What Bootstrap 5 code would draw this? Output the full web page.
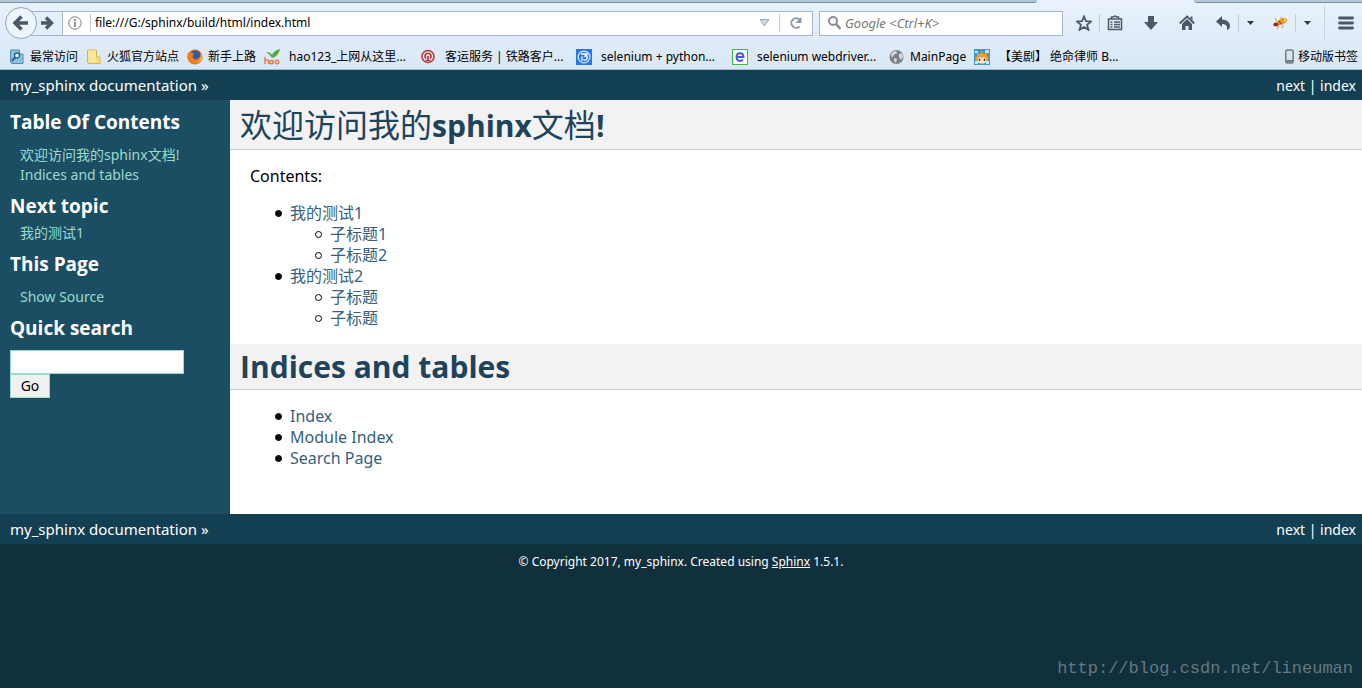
<!DOCTYPE html>
<html lang="zh-CN">
<head>
<meta charset="utf-8">
<meta name="viewport" content="width=device-width, initial-scale=1">
<title>欢迎访问我的sphinx文档!</title>
<link href="https://cdn.jsdelivr.net/npm/bootstrap@5.3.0/dist/css/bootstrap.min.css" rel="stylesheet">
<style>
body { font-family: "Noto Sans", "Noto Sans CJK SC", sans-serif; font-size: 16px; line-height: 21px; color: #000; background: #11303d; }
a { text-decoration: none; }
svg { display: block; flex: none; }
/* browser chrome */
.chrome { background: linear-gradient(#e9f2fc, #d8e7f6); border-bottom: 1px solid #a3b9ce; height: 70px; font-size: 12px; line-height: 16px; }
.tabline { height: 3px; }
.tabline span { background: #b4c8dc; border-bottom: 1px solid #7590ad; }
.tab-left { width: 1037px; border-bottom-right-radius: 4px; }
.tab-right { width: 168px; border-bottom-left-radius: 4px; }
.toolbar { height: 40px; padding-left: 5px; }
.chrome button { background: none; border: 0; padding: 0; color: #4b5966; }
.chrome .back { width: 32px; height: 32px; border: 1px solid #8ea5bc; border-radius: 50%; background: #eff5fc; z-index: 1; }
.chrome .forward { width: 31px; height: 25px; margin-left: -6px; border: 1px solid #9db3c9; border-width: 1px 0; background: #e4eef9; }
.chrome .field { height: 25px; border: 1px solid #a3b7cb; background: #fff; }
.chrome .address { padding: 0 8px 0 5px; }
.chrome .field input { border: 0; outline: 0; background: none; padding: 0; min-width: 0; color: #000; font-size: 12px; }
.chrome .search { width: 244px; margin-left: 6px; }
.chrome .search input { font-size: 13px; }
.chrome .search input::placeholder { color: #777; font-style: italic; }
.rule { width: 1px; height: 18px; background: #c0ccd8; }
.rule-tall { width: 1px; height: 36px; background: #c8d4e1; }
.tools { width: 299px; padding-left: 13px; }
.tools button { width: 16px; margin-right: 20px; }
.tools .tight { margin-right: 7px; }
.tools .gap-after { margin-right: 7px; }
.tools .caret { width: 9px; margin-right: 17px; }
.tools .menu { width: 16px; margin: 0; }
.bookmarks { display: grid; grid-template-columns: 77px 101px 77px 156px 156px 156px 157px 85px 1fr auto; padding: 0 4px 0 9px; height: 26px; }
.bookmarks a { color: #000; display: flex; align-items: center; gap: 5px; white-space: nowrap; padding-top: 1px; }
.bookmarks .wide { gap: 9px; }
/* documentation */
.related { background: #133f52; height: 30px; padding: 0 6px 0 10px; font-size: 14px; color: #fff; }
.related .crumb { font-size: 15px; }
.related a, .foot a { color: #fff; }
.sidebar { width: 230px; background: #1c4e63; padding: 10px; font-size: 14px; line-height: 20px; }
.sidebar h3 { font: bold 19px/24px "Open Sans", "Noto Sans", sans-serif; color: #fff; margin: 0; }
.sidebar ul { list-style: none; margin: 0; padding: 11px 10px 9px; }
.sidebar .next { padding: 5px 10px 9px; }
.sidebar form { padding-top: 10px; }
.sidebar a { color: #98dbcc; }
.sidebar .query { width: 174px; height: 24px; border: 1px solid #98dbcc; display: block; padding: 2px; }
.sidebar .go { width: 40px; height: 24px; border: 1px solid #98dbcc; background: #f0f0f0; display: block; padding: 0; color: #000; }
.doc { background: #fff; min-height: 414px; padding-bottom: 45px; }
.doc h1 { font: bold 30px/40px "Open Sans", "Noto Sans", "Noto Sans CJK SC", sans-serif; color: #20435c; background: #f2f2f2; border-bottom: 1px solid #ccc; margin: 0 0 16px; padding: 3px 10px 2px; }
.doc h1.lead-title { padding: 6px 10px 3px; }
.doc h1 span { font-size: 32px; line-height: 32px; font-weight: 400; }
.doc a { color: #355f7c; }
.doc p { margin: 0 20px 16px; }
.doc ul { margin: 0 20px 15px; padding-left: 40px; list-style: none; }
.doc ul ul { margin: 0; }
.doc li::before { content: ""; display: inline-block; width: 7px; height: 7px; margin: 0 8px 0 -15px; vertical-align: 2px; border: 1px solid #000; border-radius: 50%; background: #000; }
.doc ul ul li::before { background: none; }
.foot { font-size: 12px; line-height: 16px; color: #fff; }
.copyright { padding-top: 10px; }
.stamp { font: 17px/20px "Liberation Mono", monospace; color: #66777f; padding: 0 9px 9px; }
</style>
</head>
<body class="d-flex flex-column min-vh-100">
<header class="chrome">
  <div class="tabline d-flex justify-content-between"><span class="tab-left"></span><span class="tab-right"></span></div>
  <div class="toolbar d-flex align-items-center">
    <button class="back d-flex align-items-center justify-content-center position-relative" aria-label="Back"><svg width="16" height="16"><path d="M8.500 1.500 2 8l6.500 6.500M3 8h12" fill="none" stroke="currentColor" stroke-width="3.500"/></svg></button>
    <button class="forward d-flex align-items-center justify-content-end pe-2" aria-label="Forward"><svg width="14" height="14"><path d="M6 1.500 11.500 7 6 12.500M1 7h10" fill="none" stroke="currentColor" stroke-width="3.400"/></svg></button>
    <div class="field address d-flex align-items-center flex-grow-1">
      <svg class="me-2" width="14" height="14"><circle cx="7" cy="7" r="6.200" fill="none" stroke="#7b7b7b"/><path d="M7 3v2M7 6v5" stroke="#7b7b7b" stroke-width="1.600"/></svg>
      <span class="rule me-1"></span>
      <input class="flex-grow-1" type="text" aria-label="Address" value="file:///G:/sphinx/build/html/index.html">
      <button class="me-2" aria-label="History"><svg width="12" height="10"><path d="M1 1.500h9L5.500 8z" fill="#d3dae0" stroke="#9ba6b1"/></svg></button>
      <span class="rule me-2"></span>
      <button aria-label="Reload"><svg width="16" height="16"><path d="M11.500 4.500A4.800 4.800 0 1 0 11.500 11.500" fill="none" stroke="#8d99a7" stroke-width="2"/><path d="M13.500 2v6h-6z" fill="#8d99a7"/></svg></button>
    </div>
    <div class="search field d-flex align-items-center px-1">
      <svg class="ms-1 me-1" width="13" height="14"><circle cx="5" cy="5" r="4" fill="none" stroke="#8c8c8c" stroke-width="2"/><path d="m8 8 4.500 5" stroke="#8c8c8c" stroke-width="2.500"/></svg>
      <input class="flex-grow-1" type="text" aria-label="Search" placeholder="Google &lt;Ctrl+K&gt;">
    </div>
    <div class="tools d-flex align-items-center">
      <button class="tight" aria-label="Bookmark"><svg width="16" height="16"><path d="m8 1.500 2 4.700 5 .4-3.900 3.200 1.300 5L8 12l-4.400 2.800 1.300-5L1 6.600l5-.4z" fill="none" stroke="currentColor" stroke-width="1.800"/></svg></button>
      <span class="rule gap-after"></span>
      <button aria-label="Bookmarks list"><svg width="16" height="16"><path d="M1.500 4h13v10.500h-13zM4.500 4V2H6l2-1 2 1h1.500v2M3.500 7h2M3.500 9.500h2M3.500 12h2M7 7h6M7 9.500h6M7 12h6" fill="none" stroke="currentColor" stroke-width="1.500"/></svg></button>
      <button aria-label="Downloads"><svg width="16" height="16"><path d="M5 1h6v6h4l-7 8-7-8h4z" fill="currentColor"/></svg></button>
      <button aria-label="Home"><svg width="16" height="16"><path d="m.7 8.500 7.300-7 7.300 7" fill="none" stroke="currentColor" stroke-width="1.800"/><path d="m3 9 5-5 5 5v6H9.500v-4h-3v4H3zM11.500 1.500h2v4l-2-2z" fill="currentColor"/></svg></button>
      <button class="tight" aria-label="Undo"><svg width="16" height="16"><path d="M1 6.500 7 1v3.500c5 0 8 3 8 6.500 0 2-1 3.500-3 4 .5-4-1-6-5-6V12z" fill="currentColor"/></svg></button>
      <span class="rule gap-after"></span>
      <button class="caret" aria-label="Undo options"><svg width="9" height="6"><path d="M1 1h7L4.500 5z" fill="#303a44"/></svg></button>
      <button class="tight" aria-label="Firebug"><svg width="16" height="16"><path d="m3 3 2 4M9 2l1 4M1 10l4-1M5 14l2-3M10 13l1-3" stroke="#b08a5a" stroke-width=".8"/><ellipse cx="10" cy="6.500" rx="5.500" ry="3" transform="rotate(-24 10 6.500)" fill="#f39a23"/><ellipse cx="4" cy="9.500" rx="2.600" ry="2" fill="#93321b"/><path d="m7 6 2 3M11 4l1 2" stroke="#a52d18" stroke-width="1.300"/><circle cx="12.500" cy="5" r="1.200" fill="#ffe169"/></svg></button>
      <span class="rule gap-after"></span>
      <button class="caret me-2" aria-label="Firebug options"><svg width="9" height="6"><path d="M1 1h7L4.500 5z" fill="#303a44"/></svg></button>
      <span class="rule-tall ms-1"></span>
      <button class="menu ms-auto me-2" aria-label="Menu"><svg width="16" height="14"><path d="M1.500 2h13M1.500 7h13M1.500 12h13" stroke="currentColor" stroke-width="2.800" stroke-linecap="round"/></svg></button>
    </div>
  </div>
  <nav class="bookmarks" aria-label="Bookmarks">
    <a href="#"><svg width="16" height="16"><path d="M1.500 1h9v4h3.500v9.500H2.500l-1-1z" fill="#8fc0df" stroke="#4f8eb8"/><circle cx="8" cy="6.500" r="2.500" fill="#e4f3fc" stroke="#28618b" stroke-width="1.300"/><path d="m6 8.500-3 3.500" stroke="#28618b" stroke-width="2"/></svg>最常访问</a>
    <a href="#"><svg width="16" height="16"><path d="M1.500 1h9v7h3.500v6.500H2.500l-1-1z" fill="#f4dc78" stroke="#d5b64e"/><path d="M2 1.500h8V14H3z" fill="#fae89b"/></svg>火狐官方站点</a>
    <a href="#"><svg width="16" height="16"><circle cx="8" cy="8" r="7.500" fill="#e8641b"/><circle cx="8.500" cy="6.500" r="5" fill="#2a5fa7"/><path d="M1 4c2-2 2 0 4 0s2 1 1 2c-1 2 0 5 4 4 3-1 4-4 3-7 5 6 1 12-5 12S-1 10 1 4z" fill="#f07e1d"/><path d="M14 5c2 5-1 9-5 9 4-2 5-4 5-9z" fill="#fbc937"/></svg>新手上路</a>
    <a class="wide" href="#"><svg width="16" height="16"><path d="M2 3c3 0 5 1 6 3 1-3 4-5 8-6-1 5-4 8-8 9-1-2-3-4-6-6z" fill="#51aa3d"/><path d="M1 8v7m0-3c1.500-2 3.500-1 3.500 0v3M9 13a1.700 1.700 0 1 0 0 .1V11v4M13 11.300a1.800 1.800 0 1 0 .1 0" fill="none" stroke="#ed7540" stroke-width="1.400"/></svg>hao123_上网从这里...</a>
    <a class="wide" href="#"><svg width="16" height="16"><circle cx="8" cy="7.500" r="6" fill="#eef0f5" stroke="#b13b3d" stroke-width="1.600"/><path d="M6 9.500a3 3 0 1 1 4 0M8 7v4M5.500 11.500h5" fill="none" stroke="#b13b3d" stroke-width="1.700"/></svg>客运服务 | 铁路客户...</a>
    <a class="wide" href="#"><svg width="16" height="16"><path d="M0 0h16v16H0z" fill="#2678ef"/><circle cx="8" cy="8" r="5.800" fill="none" stroke="#d9eaff" stroke-width="1.300"/><path d="M5 5h6L9 7h2v2.500c0 2-3 2-3.500 1M6 7.500V12" fill="none" stroke="#fff" stroke-width="1.300"/></svg>selenium + python...</a>
    <a class="wide" href="#"><svg width="16" height="16"><path d="M.5.500h15v15H.5z" fill="#fff" stroke="#38bd3a"/><path d="M4.500 8h7c0-5-7-5-7 0s5 4.500 6.500 2.500" fill="none" stroke="#4059e8" stroke-width="2"/></svg>selenium webdriver...</a>
    <a href="#"><svg width="16" height="16"><circle cx="7.500" cy="8" r="7" fill="#7c8186"/><path d="m2 5 3-3 3 .5-.500 2-2.500 1-1 2-1.500.5zM5 9l3 1-1 4-2-2zM10 5l3-1 1 4-2 3-2-3z" fill="#d4d9de"/></svg>MainPage</a>
    <a class="wide" href="#"><svg width="16" height="16"><path d="M0 0h16v16H0z" fill="#3d99d5"/><path d="M1 2h3v2H1zM11 1h4v3h-4zM1 12h3v3H1zM12 12h3v3h-3z" fill="#c2ecff"/><path d="m3 4 3 1 2-4 1 4 4-1v3l2 3-2 2H3l-2-2 2-3z" fill="#f29b32"/><path d="M4 9l2-1 2 1 2-1 2 1v4c-2 2-6 2-8 0z" fill="#ffe9cc"/><path d="M5.500 9.500V12M10.500 9.500V12" stroke="#443326" stroke-width="1.400"/></svg>【美剧】 绝命律师 B...</a>
    <a class="gap-1" href="#"><svg width="9" height="16"><rect x=".8" y="1" width="7.400" height="13" rx="1.500" fill="#dce3e9" stroke="#737b82" stroke-width="1.500"/><path d="M1 12h7" stroke="#737b82" stroke-width="2"/></svg>移动版书签</a>
  </nav>
</header>

<nav class="related d-flex align-items-center justify-content-between" aria-label="Related">
  <span class="crumb"><a href="#">my_sphinx documentation</a> »</span>
  <span><a href="#">next</a> | <a href="#">index</a></span>
</nav>

<div class="d-flex">
  <aside class="sidebar flex-shrink-0">
    <h3>Table Of Contents</h3>
    <ul><li><a href="#welcome">欢迎访问我的sphinx文档!</a></li><li><a href="#indices">Indices and tables</a></li></ul>
    <h3>Next topic</h3>
    <ul class="next"><li><a href="#">我的测试1</a></li></ul>
    <h3>This Page</h3>
    <ul><li><a href="#">Show Source</a></li></ul>
    <h3><label for="q">Quick search</label></h3>
    <form onsubmit="return false">
      <input class="query" id="q" type="text" name="q">
      <button class="go" type="submit">Go</button>
    </form>
  </aside>
  <main class="doc flex-grow-1">
    <h1 class="lead-title" id="welcome"><span>欢迎访问我的</span>sphinx<span>文档</span>!</h1>
    <p>Contents:</p>
    <ul>
      <li><a href="#">我的测试1</a><ul><li><a href="#">子标题1</a></li><li><a href="#">子标题2</a></li></ul></li>
      <li><a href="#">我的测试2</a><ul><li><a href="#">子标题</a></li><li><a href="#">子标题</a></li></ul></li>
    </ul>
    <h1 id="indices">Indices and tables</h1>
    <ul class="mb-0"><li><a href="#">Index</a></li><li><a href="#">Module Index</a></li><li><a href="#">Search Page</a></li></ul>
  </main>
</div>

<nav class="related d-flex align-items-center justify-content-between" aria-label="Related, bottom">
  <span class="crumb"><a href="#">my_sphinx documentation</a> »</span>
  <span><a href="#">next</a> | <a href="#">index</a></span>
</nav>
<footer class="foot d-flex flex-column flex-grow-1">
  <div class="copyright text-center">© Copyright 2017, my_sphinx. Created using <a class="text-decoration-underline" href="#">Sphinx</a> 1.5.1.</div>
  <div class="stamp mt-auto text-end">http://blog.csdn.net/lineuman</div>
</footer>
<script src="https://cdn.jsdelivr.net/npm/bootstrap@5.3.0/dist/js/bootstrap.bundle.min.js"></script>
</body>
</html>
